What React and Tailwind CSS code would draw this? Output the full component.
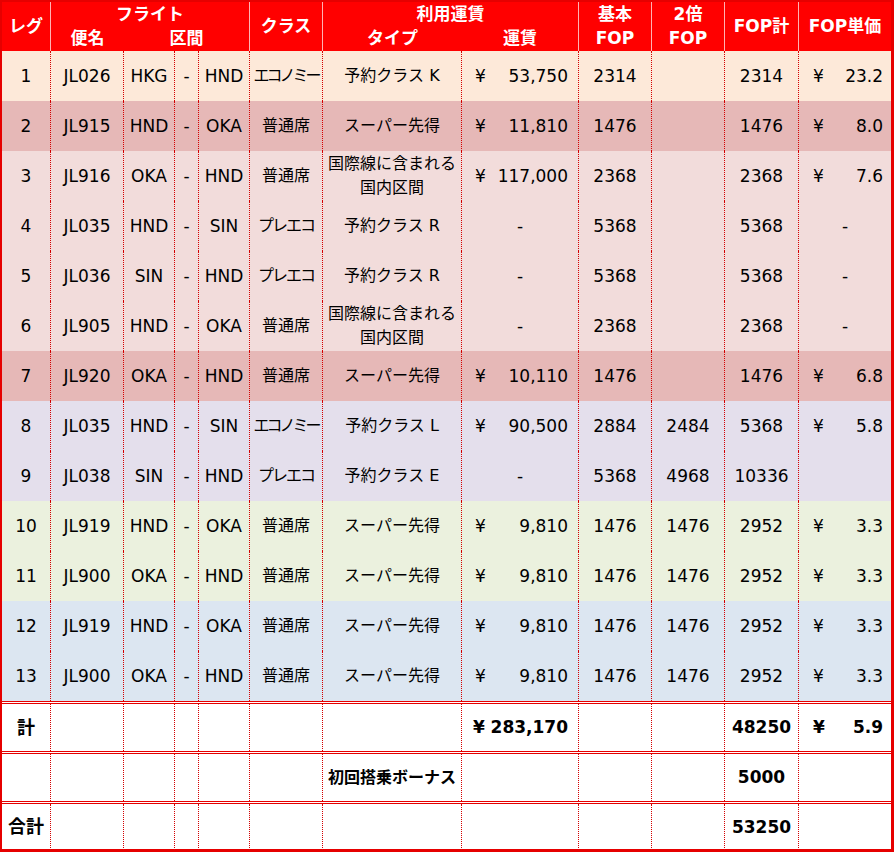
import React from 'react'

const COLS = 'grid grid-cols-[49px_73px_51px_24px_51px_73px_139px_117px_73px_73px_74px_92px]'
const DOT = 'border-r border-dotted border-[#d40000]'

const legs = [
  { n: 1, f: 'JL026', a: 'HKG', b: 'HND', c: 'エコノミー', t: '予約クラス K', fare: '53,750', base: '2314', dbl: '', tot: '2314', unit: '23.2', bg: 'bg-[#fde9d9]' },
  { n: 2, f: 'JL915', a: 'HND', b: 'OKA', c: '普通席', t: 'スーパー先得', fare: '11,810', base: '1476', dbl: '', tot: '1476', unit: '8.0', bg: 'bg-[#e6b8b7]' },
  { n: 3, f: 'JL916', a: 'OKA', b: 'HND', c: '普通席', t: ['国際線に含まれる', '国内区間'], fare: '117,000', base: '2368', dbl: '', tot: '2368', unit: '7.6', bg: 'bg-[#f2dcdb]' },
  { n: 4, f: 'JL035', a: 'HND', b: 'SIN', c: 'プレエコ', t: '予約クラス R', fare: '-', base: '5368', dbl: '', tot: '5368', unit: '-', bg: 'bg-[#f2dcdb]' },
  { n: 5, f: 'JL036', a: 'SIN', b: 'HND', c: 'プレエコ', t: '予約クラス R', fare: '-', base: '5368', dbl: '', tot: '5368', unit: '-', bg: 'bg-[#f2dcdb]' },
  { n: 6, f: 'JL905', a: 'HND', b: 'OKA', c: '普通席', t: ['国際線に含まれる', '国内区間'], fare: '-', base: '2368', dbl: '', tot: '2368', unit: '-', bg: 'bg-[#f2dcdb]' },
  { n: 7, f: 'JL920', a: 'OKA', b: 'HND', c: '普通席', t: 'スーパー先得', fare: '10,110', base: '1476', dbl: '', tot: '1476', unit: '6.8', bg: 'bg-[#e6b8b7]' },
  { n: 8, f: 'JL035', a: 'HND', b: 'SIN', c: 'エコノミー', t: '予約クラス L', fare: '90,500', base: '2884', dbl: '2484', tot: '5368', unit: '5.8', bg: 'bg-[#e4dfec]' },
  { n: 9, f: 'JL038', a: 'SIN', b: 'HND', c: 'プレエコ', t: '予約クラス E', fare: '-', base: '5368', dbl: '4968', tot: '10336', unit: '', bg: 'bg-[#e4dfec]' },
  { n: 10, f: 'JL919', a: 'HND', b: 'OKA', c: '普通席', t: 'スーパー先得', fare: '9,810', base: '1476', dbl: '1476', tot: '2952', unit: '3.3', bg: 'bg-[#ebf1de]' },
  { n: 11, f: 'JL900', a: 'OKA', b: 'HND', c: '普通席', t: 'スーパー先得', fare: '9,810', base: '1476', dbl: '1476', tot: '2952', unit: '3.3', bg: 'bg-[#ebf1de]' },
  { n: 12, f: 'JL919', a: 'HND', b: 'OKA', c: '普通席', t: 'スーパー先得', fare: '9,810', base: '1476', dbl: '1476', tot: '2952', unit: '3.3', bg: 'bg-[#dce6f1]' },
  { n: 13, f: 'JL900', a: 'OKA', b: 'HND', c: '普通席', t: 'スーパー先得', fare: '9,810', base: '1476', dbl: '1476', tot: '2952', unit: '3.3', bg: 'bg-[#dce6f1]' },
]

const classTrack = (c) => (c === 'エコノミー' ? 'tracking-[-3px]' : c === 'プレエコ' ? 'tracking-[-2px]' : '')

function Cell({ children, last, className = '' }) {
  return (
    <div className={`flex items-center justify-center whitespace-nowrap ${last ? '' : DOT} ${className}`}>
      {children}
    </div>
  )
}

function Yen({ value, pl, pr, bold }) {
  if (value === '-') return <span>-</span>
  if (!value) return null
  return (
    <div className={`flex w-full justify-between ${pl} ${pr} ${bold ? 'font-bold' : ''}`}>
      <span>¥</span>
      <span>{value}</span>
    </div>
  )
}

function HeadCell({ children, className = '', line = true }) {
  return (
    <div className={`flex items-center justify-center font-bold text-white ${line ? 'border-r border-white/70' : ''} ${className}`}>
      {children}
    </div>
  )
}

const App = () => {
  return (
    <div
      className="w-[894px] h-[852px] bg-white border-t-2 border-l-2 border-r-[3px] border-b-[3px] border-[#e60000] text-[17px] text-black leading-none overflow-hidden"
      style={{ fontFamily: '"DejaVu Sans", "Noto Sans CJK JP", sans-serif' }}
    >
      {/* header */}
      <div className={`${COLS} grid-rows-[24px_25px] bg-[#ff0000] text-[17px]`}>
        <HeadCell className="row-span-2">レグ</HeadCell>
        <HeadCell className="col-span-4">フライト</HeadCell>
        <HeadCell className="row-span-2">クラス</HeadCell>
        <HeadCell className="col-span-2">利用運賃</HeadCell>
        <HeadCell className="row-span-2 flex-col gap-[7px]"><span>基本</span><span>FOP</span></HeadCell>
        <HeadCell className="row-span-2 flex-col gap-[7px]"><span>2倍</span><span>FOP</span></HeadCell>
        <HeadCell className="row-span-2">FOP計</HeadCell>
        <HeadCell className="row-span-2" line={false}>FOP単価</HeadCell>
        <HeadCell line={false}>便名</HeadCell>
        <HeadCell className="col-span-3">区間</HeadCell>
        <HeadCell line={false}>タイプ</HeadCell>
        <HeadCell>運賃</HeadCell>
      </div>

      {/* legs */}
      {legs.map((l) => (
        <div key={l.n} className={`${COLS} h-[50px] ${l.bg}`}>
          <Cell>{l.n}</Cell>
          <Cell>{l.f}</Cell>
          <Cell>{l.a}</Cell>
          <Cell>-</Cell>
          <Cell>{l.b}</Cell>
          <Cell className={`text-[16px] ${classTrack(l.c)}`}>{l.c}</Cell>
          <Cell className="text-[16px] flex-col gap-[8px]">
            {Array.isArray(l.t) ? l.t.map((s) => <span key={s}>{s}</span>) : l.t}
          </Cell>
          <Cell><Yen value={l.fare} pl="pl-[13px]" pr="pr-[10px]" /></Cell>
          <Cell>{l.base}</Cell>
          <Cell>{l.dbl}</Cell>
          <Cell>{l.tot}</Cell>
          <Cell last><Yen value={l.unit} pl="pl-[14px]" pr="pr-[8px]" /></Cell>
        </div>
      ))}

      {/* totals */}
      <div className={`${COLS} h-[50px] border-t-[3px] border-double border-[#e60000] font-bold`}>
        <Cell className="text-[18px]">計</Cell>
        <Cell /><Cell /><Cell /><Cell /><Cell /><Cell />
        <Cell><Yen value="283,170" pl="pl-[11px]" pr="pr-[10px]" bold /></Cell>
        <Cell />
        <Cell />
        <Cell>48250</Cell>
        <Cell last><Yen value="5.9" pl="pl-[14px]" pr="pr-[8px]" bold /></Cell>
      </div>
      <div className={`${COLS} h-[50px] border-t-[3px] border-double border-[#e60000] font-bold`}>
        <Cell /><Cell /><Cell /><Cell /><Cell /><Cell />
        <Cell className="text-[16px]">初回搭乗ボーナス</Cell>
        <Cell />
        <Cell />
        <Cell />
        <Cell>5000</Cell>
        <Cell last />
      </div>
      <div className={`${COLS} h-[49px] border-t-[3px] border-double border-[#e60000] font-bold`}>
        <Cell className="text-[18px]">合計</Cell>
        <Cell /><Cell /><Cell /><Cell /><Cell /><Cell /><Cell /><Cell /><Cell />
        <Cell>53250</Cell>
        <Cell last />
      </div>
    </div>
  )
}

export default App
